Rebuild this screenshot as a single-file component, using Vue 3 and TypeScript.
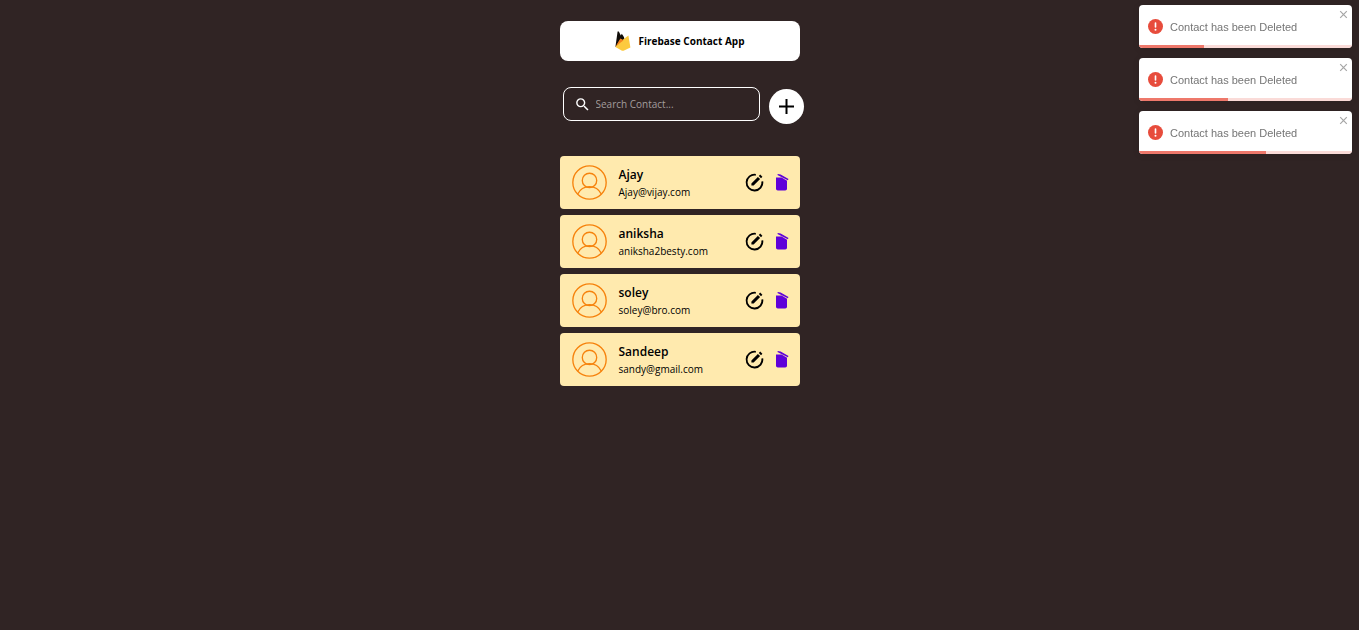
<script setup lang="ts">
import { computed, ref } from 'vue'

interface Contact {
  id: number
  name: string
  email: string
}

interface Toast {
  id: number
  message: string
  remaining: number
}

const search = ref('')

const contacts = ref<Contact[]>([
  { id: 1, name: 'Ajay', email: 'Ajay@vijay.com' },
  { id: 2, name: 'aniksha', email: 'aniksha2besty.com' },
  { id: 3, name: 'soley', email: 'soley@bro.com' },
  { id: 4, name: 'Sandeep', email: 'sandy@gmail.com' },
])

const toasts = ref<Toast[]>([
  { id: 1, message: 'Contact has been Deleted', remaining: 30.6 },
  { id: 2, message: 'Contact has been Deleted', remaining: 42 },
  { id: 3, message: 'Contact has been Deleted', remaining: 59.6 },
])

const visibleContacts = computed(() =>
  contacts.value.filter((c) => c.name.toLowerCase().includes(search.value.toLowerCase())),
)

function removeContact(id: number) {
  contacts.value = contacts.value.filter((c) => c.id !== id)
}

function closeToast(id: number) {
  toasts.value = toasts.value.filter((t) => t.id !== id)
}
</script>

<template>
  <main class="app">
    <header class="navbar">
      <svg class="logo" viewBox="0 0 16 20" aria-hidden="true">
        <path d="M0.4 16 2.6 0.4 3.8 0.4 5.8 4.4 6.8 2.8 8 4.6 9 6.2 9.6 9z" fill="#100c08" />
        <path d="M0.4 16 5.4 7.6 9 9.8z" fill="#f58220" />
        <path d="M0.4 16 8.4 8.2 13.4 4.4 15.4 16.4 8.6 19.8 7 19.8z" fill="#fcca3f" />
        <path d="M1.4 14.4 5.6 7.8 8.4 9.6z" fill="#f58220" />
      </svg>
      <h1>Firebase Contact App</h1>
    </header>

    <div class="toolbar">
      <label class="search">
        <svg class="search-icon" viewBox="0 0 24 24" aria-hidden="true">
          <path
            fill="#fff"
            d="M15.5 14h-.79l-.28-.27A6.471 6.471 0 0 0 16 9.5 6.5 6.5 0 1 0 9.5 16c1.61 0 3.09-.59 4.23-1.57l.27.28v.79l5 4.99L20.49 19l-4.99-5zm-6 0C7.01 14 5 11.99 5 9.5S7.01 5 9.5 5 14 7.01 14 9.5 11.99 14 9.5 14z"
          />
        </svg>
        <input v-model="search" type="text" placeholder="Search Contact..." aria-label="Search Contact" />
      </label>
      <button class="add" type="button" aria-label="Add contact">
        <svg viewBox="0 0 35 35" aria-hidden="true">
          <path d="M17.5 10v15M10 17.5h15" stroke="#000" stroke-width="2" />
        </svg>
      </button>
    </div>

    <ul class="contacts">
      <li v-for="contact in visibleContacts" :key="contact.id" class="card">
        <svg class="avatar" viewBox="0 0 34 34" fill="none" stroke="#f6820c" stroke-width="1.3" aria-hidden="true">
          <circle cx="17" cy="17" r="16.2" />
          <circle cx="17" cy="15" r="7" />
          <path d="M5.6 28.2A12.6 12.6 0 0 1 28.4 28.2" />
        </svg>
        <div class="info">
          <h2>{{ contact.name }}</h2>
          <p>{{ contact.email }}</p>
        </div>
        <div class="actions">
          <button type="button" :aria-label="`Edit ${contact.name}`">
            <svg class="edit" viewBox="0 0 19 19" aria-hidden="true">
              <path d="M10.8 1.8A7.9 7.9 0 1 0 17.3 8.4" fill="none" stroke="#000" stroke-width="1.8" />
              <path d="M6.4 10.4 12.9 3.9 15.1 6.1 8.6 12.6H6.4zM13.8 3 15.2 1.6 17.4 3.8 16 5.2z" fill="#000" />
            </svg>
          </button>
          <button type="button" :aria-label="`Delete ${contact.name}`" @click="removeContact(contact.id)">
            <svg class="trash" viewBox="0 0 14 18" aria-hidden="true">
              <path d="M1 3.6H6.6L12 6.8V14.8Q12 16.6 10.2 16.6H2.8Q1 16.6 1 14.8z" fill="#5f00d9" />
              <path d="M2.8 0 5.6 0.4 13.5 4.9 12.8 6.3 2.4 1z" fill="#5f00d9" />
            </svg>
          </button>
        </div>
      </li>
    </ul>
  </main>

  <section class="toasts" aria-label="Notifications">
    <div v-for="toast in toasts" :key="toast.id" class="toast" role="alert">
      <svg class="alert-icon" viewBox="0 0 24 24" aria-hidden="true">
        <circle cx="12" cy="12" r="12" fill="#e74c3c" />
        <path d="M12 6.4v6.2" stroke="#fff" stroke-width="2.6" stroke-linecap="round" />
        <circle cx="12" cy="17" r="1.6" fill="#fff" />
      </svg>
      <span class="message">{{ toast.message }}</span>
      <button class="close" type="button" aria-label="Close" @click="closeToast(toast.id)">
        <svg viewBox="0 0 9 11" aria-hidden="true">
          <path d="M1.2 2.2 7.8 8.8M7.8 2.2 1.2 8.8" stroke="#a6a6a6" stroke-width="1.2" />
        </svg>
      </button>
      <div class="track">
        <div class="bar" :style="{ width: `${toast.remaining}%` }"></div>
      </div>
    </div>
  </section>
</template>

<style>
body {
  margin: 0;
  background: #302424;
}
</style>

<style scoped>
.app {
  box-sizing: border-box;
  width: 240px;
  margin: 0 auto;
  padding-top: 21px;
  font-family: 'Segoe UI', 'Open Sans', 'Noto Sans', sans-serif;
  color: #000;
}

button {
  display: block;
  padding: 0;
  border: 0;
  background: none;
  cursor: pointer;
}

svg {
  display: block;
  flex: none;
}

.navbar {
  display: flex;
  align-items: center;
  justify-content: center;
  gap: 8px;
  height: 40px;
  border-radius: 8px;
  background: #fff;
}

.logo {
  width: 16px;
  height: 20px;
}

h1,
h2,
p {
  margin: 0;
}

h1 {
  font-size: 10px;
  line-height: 16px;
  font-weight: 700;
}

.toolbar {
  display: flex;
  align-items: flex-end;
  gap: 9px;
  margin: 26px -4px 0 3px;
}

.search {
  display: flex;
  flex: 1;
  align-items: center;
  box-sizing: border-box;
  min-width: 0;
  height: 34px;
  margin-bottom: 3px;
  padding: 0 10px;
  gap: 5px;
  border: 1px solid #fff;
  border-radius: 8px;
}

.search-icon {
  width: 17px;
  height: 17px;
}

.search input {
  flex: 1;
  min-width: 0;
  padding: 0;
  border: 0;
  outline: 0;
  background: transparent;
  color: #fff;
  font: inherit;
  font-size: 10px;
  line-height: 16px;
}

.search input::placeholder {
  color: #a39d9d;
  opacity: 1;
}

.add {
  width: 35px;
  height: 35px;
  border-radius: 50%;
  background: #fff;
}

.contacts {
  display: flex;
  flex-direction: column;
  gap: 6px;
  margin: 32px 0 0;
  padding: 0;
  list-style: none;
}

.card {
  display: flex;
  align-items: center;
  box-sizing: border-box;
  height: 53px;
  padding: 0 11px 0 12px;
  gap: 12px;
  border-radius: 4px;
  background: #ffeaae;
}

.avatar {
  width: 35px;
  height: 35px;
}

.info {
  flex: 1;
  min-width: 0;
}

h2 {
  font-size: 12px;
  line-height: 18px;
  font-weight: 600;
}

p {
  font-size: 10px;
  line-height: 16px;
}

.actions {
  display: flex;
  align-items: center;
  gap: 11px;
}

.edit {
  width: 19px;
  height: 19px;
}

.trash {
  width: 14px;
  height: 18px;
}

.toasts {
  position: fixed;
  top: 5px;
  right: 7px;
  display: flex;
  flex-direction: column;
  gap: 10px;
  width: 213px;
  font-family: 'Liberation Sans', Arial, sans-serif;
}

.toast {
  position: relative;
  display: flex;
  align-items: center;
  box-sizing: border-box;
  height: 43px;
  padding: 0 9px;
  gap: 7px;
  overflow: hidden;
  border-radius: 4px;
  background: #fff;
  box-shadow: 0 1px 7px rgba(0, 0, 0, 0.1);
}

.alert-icon {
  width: 15px;
  height: 15px;
}

.message {
  color: #757575;
  font-size: 11px;
  line-height: 16px;
}

.close {
  position: absolute;
  top: 4px;
  right: 4px;
}

.close svg {
  width: 9px;
  height: 11px;
}

.track {
  position: absolute;
  right: 0;
  bottom: 0;
  left: 0;
  height: 3px;
  background: #fadbd8;
}

.bar {
  height: 100%;
  background: #ee786b;
}
</style>
